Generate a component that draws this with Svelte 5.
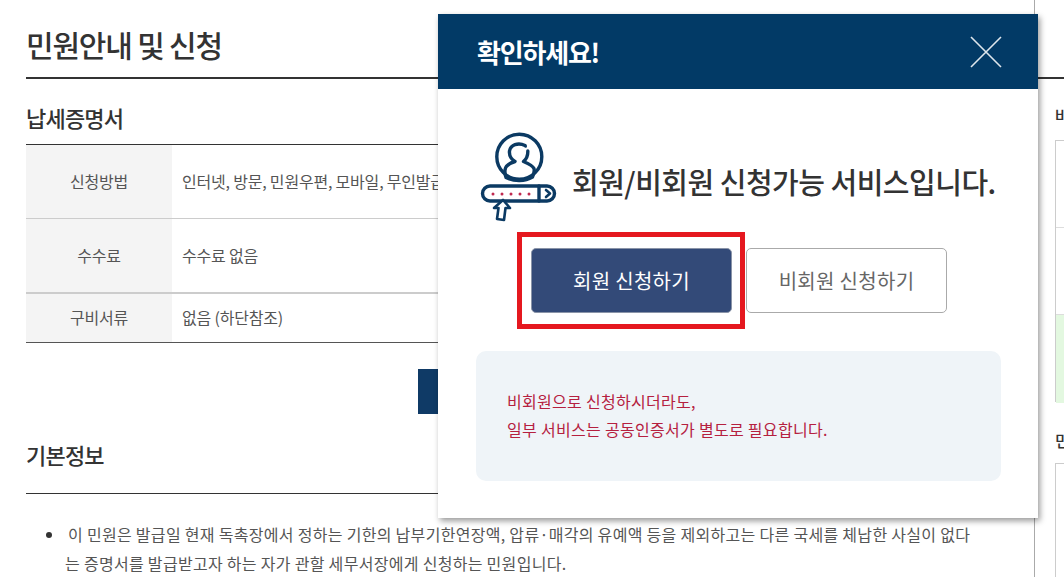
<script>
    const rows = [
        { label: '신청방법', value: '인터넷, 방문, 민원우편, 모바일, 무인발급기', height: 'tall' },
        { label: '수수료', value: '수수료 없음', height: 'tall' },
        { label: '구비서류', value: '없음 (하단참조)', height: 'short' }
    ];
</script>

<div class="page">
    <main class="content">
        <h1>민원안내 및 신청</h1>
        <h2>납세증명서</h2>
        <div class="table">
            {#each rows as row}
                <div class="row {row.height}">
                    <div class="label">{row.label}</div>
                    <div class="value">{row.value}</div>
                </div>
            {/each}
        </div>
        <div class="apply-row">
            <div class="apply-btn"></div>
        </div>
        <h2 class="basic">기본정보</h2>
        <ul>
            <li>이 민원은 발급일 현재 독촉장에서 정하는 기한의 납부기한연장액, 압류·매각의 유예액 등을 제외하고는 다른 국세를 체납한 사실이 없다는 증명서를 발급받고자 하는 자가 관할 세무서장에게 신청하는 민원입니다.</li>
        </ul>
    </main>

    <aside class="side">
        <div class="side-title">바로가기</div>
        <div class="side-box">
            <div class="side-cell"></div>
            <div class="side-cell"></div>
            <div class="side-cell green"></div>
        </div>
        <div class="side-title second">민원신청</div>
        <div class="side-box open"></div>
    </aside>

    <div class="modal">
        <header class="modal-head">
            <span>확인하세요!</span>
            <svg class="close" viewBox="0 0 32 32" aria-label="닫기">
                <path d="M1 1 L31 31 M31 1 L1 31" />
            </svg>
        </header>

        <div class="notice">
            <svg class="member-icon" viewBox="478 130 82 95">
                <g class="navy">
                    <circle cx="519.3" cy="156.7" r="22.5" />
                    <path d="M525 145.5 C518 142 510.5 145 509.5 151 C509 156 511.5 159.5 515 161.5 C510 163 505.5 166 505 170 C504.8 173 505 175.5 506 177.5 C514 181.5 525 181.5 532.5 177 C534 174 534.5 171 534 168.5 C532.5 165.5 527 163 523.5 161.5 C526.5 159 528 155.5 527.8 151" />
                    <rect x="482.5" y="186" width="72" height="15" rx="7.5" fill="#fff" />
                    <path d="M539 186 V201" />
                    <path class="thin" d="M546 190 L550 193.5 L546 197" />
                    <path class="thin arrow" d="M503 200 L510 208 H505.5 L504 220 L497 219 L498.5 208 L494 208 Z" />
                </g>
                <g class="dots">
                    <circle cx="493" cy="194" r="1.5" />
                    <circle cx="502" cy="194" r="1.5" />
                    <circle cx="511" cy="194" r="1.5" />
                    <circle cx="520" cy="194" r="1.5" />
                    <circle cx="529" cy="194" r="1.5" />
                </g>
                <circle class="head-dot" cx="525.7" cy="146.5" r="1.3" />
            </svg>
            <p>회원/비회원 신청가능 서비스입니다.</p>
        </div>

        <div class="buttons">
            <div class="highlight">
                <button class="primary">회원 신청하기</button>
            </div>
            <button class="secondary">비회원 신청하기</button>
        </div>

        <div class="info">
            <p>비회원으로 신청하시더라도,</p>
            <p>일부 서비스는 공동인증서가 별도로 필요합니다.</p>
        </div>
    </div>
</div>

<style>
    :global(body) {
        margin: 0;
        overflow: hidden;
        background: #fff;
    }

    .page {
        position: relative;
        width: 1064px;
        height: 577px;
        overflow: hidden;
        display: flex;
        font-family: "Noto Sans CJK KR", "Noto Sans", sans-serif;
        color: #333;
    }

    .content {
        width: 1008px;
        margin-left: 26px;
        border-right: 1px solid #aaa;
        flex-shrink: 0;
    }

    h1 {
        margin: 0;
        height: 77px;
        border-bottom: 2px solid #333;
        width: 1038px;
        font-size: 30px;
        font-weight: 500;
        line-height: 88px;
        letter-spacing: -1.2px;
    }

    h2 {
        margin: 0;
        font-size: 22px;
        font-weight: 500;
        letter-spacing: -0.8px;
        line-height: 76px;
        height: 65px;
        width: 1008px;
    }

    .table {
        width: 1008px;
        border-top: 1px solid #333;
        border-bottom: 1px solid #555;
    }

    .row {
        display: flex;
        border-bottom: 1px solid #ccc;
        font-size: 16px;
        color: #555;
        letter-spacing: -0.2px;
    }

    .row:last-child {
        border-bottom: 0;
    }

    .row.tall {
        height: 73px;
    }

    .row.short {
        height: 48px;
        border-top: 1px solid #ccc;
    }

    .label {
        width: 146px;
        background: #f4f4f4;
        display: flex;
        align-items: center;
        justify-content: center;
        padding-bottom: 2px;
        box-sizing: border-box;
    }

    .value {
        padding: 0 0 2px 10px;
        display: flex;
        align-items: center;
    }

    .apply-row {
        height: 71px;
        padding-left: 392px;
        padding-top: 26px;
        box-sizing: border-box;
    }

    .apply-btn {
        width: 100px;
        height: 45px;
        background: #0f3a66;
    }

    h2.basic {
        height: 79px;
        line-height: 80px;
        border-bottom: 1px solid #333;
    }

    ul {
        margin: 0;
        padding: 26px 0 0 39px;
        width: 908px;
        font-size: 16px;
        line-height: 29px;
        letter-spacing: 0.3px;
        color: #555;
    }

    li {
        text-indent: 3px;
    }

    li::marker {
        color: #333;
    }

    .side {
        width: 30px;
        margin-left: 20px;
        flex: 1;
    }

    .side-title {
        font-size: 16px;
        font-weight: 500;
        height: 50px;
        line-height: 50px;
        margin-top: 90px;
        white-space: nowrap;
    }

    .side-title.second {
        margin-top: 20px;
        height: 41px;
        line-height: 36px;
    }

    .side-box {
        width: 60px;
        height: 260px;
        border: 1px solid #ccc;
    }

    .side-box.open {
        height: 200px;
    }

    .side-cell {
        height: 86px;
        border-bottom: 1px solid #ddd;
    }

    .side-cell.green {
        height: 88px;
        border-bottom: 0;
        background: #e3f8e0;
    }

    .modal {
        position: absolute;
        left: 438px;
        top: 14px;
        width: 600px;
        height: 504px;
        background: #fff;
        box-shadow: 2px 3px 6px rgba(0, 0, 0, 0.4);
    }

    .modal-head {
        height: 75px;
        background: #023a66;
        color: #fff;
        display: flex;
        align-items: center;
        justify-content: space-between;
        padding: 0 36px 0 39px;
        font-size: 26px;
        font-weight: 700;
        letter-spacing: -1.2px;
    }

    .close {
        width: 32px;
        height: 32px;
    }

    .close path {
        stroke: #dfe6ec;
        stroke-width: 1.6;
        fill: none;
    }

    .notice {
        display: flex;
        align-items: flex-start;
        height: 135px;
        box-sizing: border-box;
        padding: 41px 0 0 40px;
    }

    .member-icon {
        width: 82px;
        height: 95px;
        flex-shrink: 0;
    }

    .navy {
        fill: none;
        stroke: #0b3a63;
        stroke-width: 3.4;
        stroke-linecap: round;
        stroke-linejoin: round;
    }

    .navy .thin {
        stroke-width: 2.6;
    }

    .navy .arrow {
        fill: #fff;
    }

    .dots {
        fill: #c0294f;
    }

    .head-dot {
        fill: #0b3a63;
    }

    .notice p {
        margin: 30px 0 0 12px;
        font-size: 29px;
        line-height: 42px;
        font-weight: 500;
        letter-spacing: -0.5px;
        white-space: nowrap;
    }

    .buttons {
        display: flex;
        align-items: center;
        margin: 8px 0 0 79px;
    }

    .highlight {
        border: 5px solid #e5181f;
        padding: 11px 8px 11px 9px;
        margin-right: 1px;
    }

    button {
        width: 201px;
        height: 65px;
        border-radius: 5px;
        font-family: inherit;
        font-size: 20px;
        letter-spacing: 0.3px;
        padding: 0;
    }

    .primary {
        background: #334a78;
        border: 1px solid #8a94a8;
        color: #fff;
    }

    .secondary {
        background: #fff;
        border: 1px solid #aaa;
        color: #666;
    }

    .info {
        margin: 22px 37px 0 38px;
        height: 130px;
        box-sizing: border-box;
        background: #eff4f8;
        border-radius: 10px;
        padding: 36px 0 0 31px;
        color: #b5203f;
        font-size: 16px;
        line-height: 28px;
        letter-spacing: 0.3px;
    }

    .info p {
        margin: 0;
    }
</style>
